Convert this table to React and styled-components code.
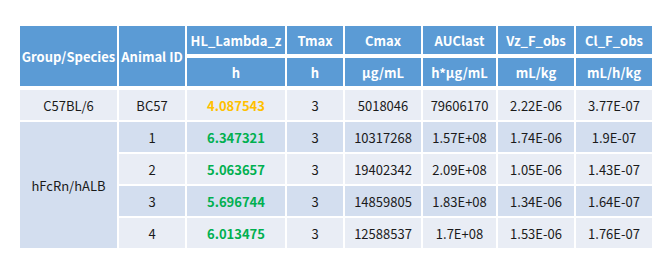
import React from 'react';
import styled, { createGlobalStyle } from 'styled-components';

const GlobalStyle = createGlobalStyle`
  body {
    margin: 0;
    background: #ffffff;
    font-family: "Noto Sans CJK SC", "Noto Sans", sans-serif;
  }
`;

const Page = styled.div`
  padding: 24px 0 0 18px;
`;

const Table = styled.table`
  border-collapse: collapse;
  table-layout: fixed;
  width: 636px;
`;

const HeadCell = styled.th`
  background: #5b9bd5;
  color: #ffffff;
  font-weight: 700;
  font-size: 13px;
  height: ${({ tall }) => (tall ? '60px' : '28px')};
  padding: 0;
  text-align: center;
  border: 2px solid #ffffff;
  border-bottom-width: 4px;
  white-space: nowrap;
  overflow: hidden;
`;

const Cell = styled.td`
  background: ${({ dark }) => (dark ? '#d3deef' : '#e9edf5')};
  color: ${({ tone }) => (tone === 'orange' ? '#ffc000' : tone === 'green' ? '#00b050' : '#1a1a1a')};
  font-weight: ${({ tone }) => (tone ? 700 : 400)};
  font-size: 13px;
  height: 30px;
  padding: 0;
  text-align: center;
  border: 2px solid #ffffff;
  white-space: nowrap;
`;

const columns = [99, 68, 100, 58, 78, 75, 78, 78];
const params = [
  ['HL_Lambda_z', 'h'],
  ['Tmax', 'h'],
  ['Cmax', 'μg/mL'],
  ['AUClast', 'h*μg/mL'],
  ['Vz_F_obs', 'mL/kg'],
  ['Cl_F_obs', 'mL/h/kg'],
];

const rows = [
  { id: '1', hl: '6.347321', tmax: '3', cmax: '10317268', auc: '1.57E+08', vz: '1.74E-06', cl: '1.9E-07' },
  { id: '2', hl: '5.063657', tmax: '3', cmax: '19402342', auc: '2.09E+08', vz: '1.05E-06', cl: '1.43E-07' },
  { id: '3', hl: '5.696744', tmax: '3', cmax: '14859805', auc: '1.83E+08', vz: '1.34E-06', cl: '1.64E-07' },
  { id: '4', hl: '6.013475', tmax: '3', cmax: '12588537', auc: '1.7E+08', vz: '1.53E-06', cl: '1.76E-07' },
];

export default function App() {
  return (
    <Page>
      <GlobalStyle />
      <Table>
        <colgroup>
          {columns.map((w, i) => (
            <col key={i} style={{ width: w }} />
          ))}
        </colgroup>
        <thead>
          <tr>
            <HeadCell rowSpan={2} tall>Group/Species</HeadCell>
            <HeadCell rowSpan={2} tall>Animal ID</HeadCell>
            {params.map(([name]) => (
              <HeadCell key={name}>{name}</HeadCell>
            ))}
          </tr>
          <tr>
            {params.map(([name, unit]) => (
              <HeadCell key={name}>{unit}</HeadCell>
            ))}
          </tr>
        </thead>
        <tbody>
          <tr>
            <Cell>C57BL/6</Cell>
            <Cell>BC57</Cell>
            <Cell tone="orange">4.087543</Cell>
            <Cell>3</Cell>
            <Cell>5018046</Cell>
            <Cell>79606170</Cell>
            <Cell>2.22E-06</Cell>
            <Cell>3.77E-07</Cell>
          </tr>
          {rows.map((r, i) => {
            const dark = i % 2 === 0;
            return (
              <tr key={r.id}>
                {i === 0 && (
                  <Cell rowSpan={4} dark>
                    hFcRn/hALB
                  </Cell>
                )}
                <Cell dark={dark}>{r.id}</Cell>
                <Cell dark={dark} tone="green">{r.hl}</Cell>
                <Cell dark={dark}>{r.tmax}</Cell>
                <Cell dark={dark}>{r.cmax}</Cell>
                <Cell dark={dark}>{r.auc}</Cell>
                <Cell dark={dark}>{r.vz}</Cell>
                <Cell dark={dark}>{r.cl}</Cell>
              </tr>
            );
          })}
        </tbody>
      </Table>
    </Page>
  );
}
